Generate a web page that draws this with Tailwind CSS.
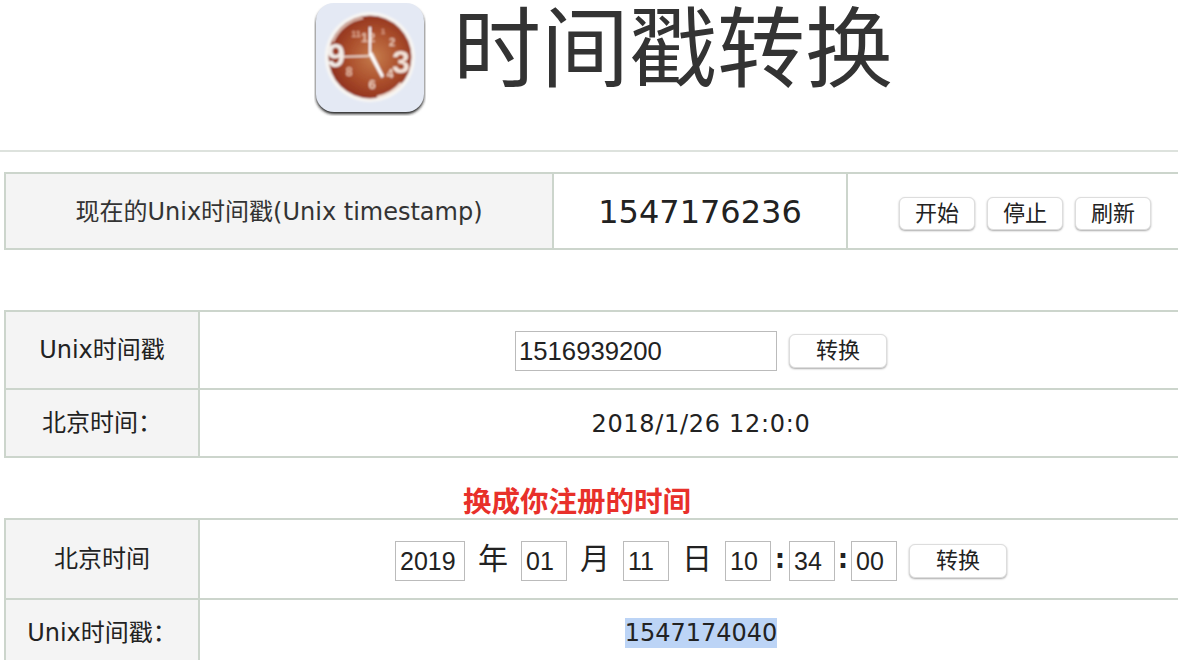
<!DOCTYPE html>
<html lang="zh-CN">
<head>
<meta charset="utf-8">
<title>时间戳转换</title>
<script src="https://cdn.jsdelivr.net/npm/@tailwindcss/browser@4"></script>
</head>
<body class="m-0 h-[660px] w-[1178px] overflow-hidden bg-white text-black font-['DejaVu_Sans','Noto_Sans_CJK_SC',sans-serif]">
<header class="h-[152px] border-b-2 border-[#dde2dd] flex justify-center items-start pl-[29px]">
  <svg class="mt-[2px] shrink-0" width="112" height="114" viewBox="0 0 112 114">
    <defs>
      <radialGradient id="f" cx="0.55" cy="0.5" r="0.62"><stop offset="0" stop-color="#c67c4c"/><stop offset="0.5" stop-color="#ab4f2c"/><stop offset="1" stop-color="#872618"/></radialGradient>
      <filter id="b" x="-10%" y="-10%" width="120%" height="120%"><feGaussianBlur stdDeviation="0.8"/></filter>
      <filter id="s" x="-10%" y="-10%" width="120%" height="120%"><feGaussianBlur stdDeviation="1.4"/></filter>
    </defs>
    <rect x="2" y="4" width="108" height="108" rx="18" fill="#1c1c1c" filter="url(#s)"/>
    <rect x="2" y="1" width="108" height="109" rx="18" fill="#e4e9f4"/>
    <g filter="url(#b)" font-family="Liberation Sans, sans-serif" font-weight="700" text-anchor="middle">
      <circle cx="56" cy="55" r="45" fill="#f8f6f3"/>
      <circle cx="56" cy="55" r="41.5" fill="url(#f)"/>
      <path d="M19 40A40 40 0 0 1 49 16" fill="none" stroke="#efd6c8" stroke-width="1.500"/>
      <path d="M63 95A41 41 0 0 0 87 81" fill="none" stroke="#f5e3d8" stroke-width="2"/>
      <text x="54" y="40" font-size="13" fill="#e9c0aa">12</text>
      <text x="42" y="35" font-size="9" fill="#e3ab92">11</text>
      <text x="69" y="32" font-size="8" fill="#e3ab92">1</text>
      <text x="78" y="44" font-size="11" fill="#edcdbb">2</text>
      <text x="76" y="76" font-size="12" fill="#f0d8ca">4</text>
      <text x="58" y="87" font-size="13" fill="#efcfbd">6</text>
      <text x="35" y="74" font-size="12" fill="#e8bca6">8</text>
      <text x="87" y="71" font-size="32" fill="#f4e4da">3</text>
      <text x="22" y="65" font-size="33" fill="#f2ece8">9</text>
      <path d="M56 54V25" stroke="#fff" stroke-width="2"/>
      <path d="M55 54L22 55" stroke="#f8ece4" stroke-width="1.600"/>
      <path d="M54.500 52L58 50L70 74L67.500 76Z" fill="#fff"/>
    </g>
  </svg>
  <h1 class="ml-[27px] mt-[4px] text-[88px] leading-[92px] font-normal text-[#333] whitespace-nowrap">时间戳转换</h1>
</header>

<section class="mt-[20px] ml-[4px] h-[78px] border-y-2 border-l-2 border-[#ccd5cc] flex text-[#222]">
  <div class="w-[548px] bg-[#f4f4f4] border-r-2 border-[#ccd5cc] flex items-center justify-center pt-[1px] text-[24px] text-[#333]">现在的Unix时间戳(Unix timestamp)</div>
  <div class="w-[294px] border-r-2 border-[#ccd5cc] flex items-center justify-center pt-[1px] text-[32px]">1547176236</div>
  <div class="flex-1 flex items-center gap-[12px] pl-[51px] pt-[5px]">
    <button class="w-[76px] h-[33px] rounded-[6px] border border-[#ddd] shadow-[0_1px_2px_#aaa] bg-white text-[22px] leading-[30px] text-[#222]">开始</button>
    <button class="w-[76px] h-[33px] rounded-[6px] border border-[#ddd] shadow-[0_1px_2px_#aaa] bg-white text-[22px] leading-[30px] text-[#222]">停止</button>
    <button class="w-[76px] h-[33px] rounded-[6px] border border-[#ddd] shadow-[0_1px_2px_#aaa] bg-white text-[22px] leading-[30px] text-[#222]">刷新</button>
  </div>
</section>

<section class="mt-[60px] ml-[4px] w-[1198px] border-y-2 border-l-2 border-[#ccd5cc] text-[#222]">
  <div class="h-[78px] flex border-b-2 border-[#ccd5cc]">
    <div class="w-[194px] bg-[#f4f4f4] border-r-2 border-[#ccd5cc] flex items-center justify-center text-[24px]">Unix时间戳</div>
    <div class="flex-1 flex items-center justify-center gap-[12px] pt-[2px]">
      <input value="1516939200" class="w-[262px] h-[40px] border border-[#bbb] px-[3px] font-['Liberation_Sans'] text-[25.700px] text-[#222]">
      <button class="w-[98px] h-[34px] rounded-[6px] border border-[#ddd] shadow-[0_1px_2px_#aaa] bg-white text-[22px] leading-[30px] text-[#222]">转换</button>
    </div>
  </div>
  <div class="h-[66px] flex">
    <div class="w-[194px] bg-[#f4f4f4] border-r-2 border-[#ccd5cc] flex items-center justify-center text-[24px]">北京时间：</div>
    <div class="flex-1 flex items-center justify-center pt-[1px] text-[24px] tracking-[0.7px]">2018/1/26 12:0:0</div>
  </div>
</section>

<p class="h-[60px] w-[1154px] text-center text-[#e8302a] text-[28.500px] leading-[90px] font-bold">换成你注册的时间</p>

<section class="ml-[4px] w-[1198px] border-t-2 border-l-2 border-[#ccd5cc] text-[#222]">
  <div class="h-[80px] flex border-b-2 border-[#ccd5cc]">
    <div class="w-[194px] bg-[#f4f4f4] border-r-2 border-[#ccd5cc] flex items-center justify-center text-[24px]">北京时间</div>
    <div class="flex-1 flex items-center justify-center text-[30px] pt-[4px]">
      <input value="2019" class="w-[70px] h-[40px] border border-[#bbb] px-[4px] font-['Liberation_Sans'] text-[25px] text-[#222]">
      <span class="mx-[13px] -mt-[5px]">年</span>
      <input value="01" class="w-[46px] h-[40px] border border-[#bbb] px-[4px] font-['Liberation_Sans'] text-[25px] text-[#222]">
      <span class="mx-[13px] -mt-[5px]">月</span>
      <input value="11" class="w-[46px] h-[40px] border border-[#bbb] px-[4px] font-['Liberation_Sans'] text-[25px] text-[#222]">
      <span class="mx-[13px] -mt-[5px]">日</span>
      <input value="10" class="w-[46px] h-[40px] border border-[#bbb] px-[4px] font-['Liberation_Sans'] text-[25px] text-[#222]">
      <span class="w-[18px] text-center font-bold text-[26px] -mt-[4px]">:</span>
      <input value="34" class="w-[46px] h-[40px] border border-[#bbb] px-[4px] font-['Liberation_Sans'] text-[25px] text-[#222]">
      <span class="w-[16px] text-center font-bold text-[26px] -mt-[4px]">:</span>
      <input value="00" class="w-[46px] h-[40px] border border-[#bbb] px-[4px] font-['Liberation_Sans'] text-[25px] text-[#222]">
      <button class="ml-[12px] w-[98px] h-[34px] rounded-[6px] border border-[#ddd] shadow-[0_1px_2px_#aaa] bg-white text-[22px] leading-[30px] text-[#222]">转换</button>
    </div>
  </div>
  <div class="h-[66px] flex">
    <div class="w-[194px] bg-[#f4f4f4] border-r-2 border-[#ccd5cc] flex items-center justify-center text-[24px]">Unix时间戳：</div>
    <div class="flex-1 flex items-center justify-center text-[24px]"><span class="inline-block h-[30px] leading-[30px] bg-[#bcd4f6]">1547174040</span></div>
  </div>
</section>
</body>
</html>
